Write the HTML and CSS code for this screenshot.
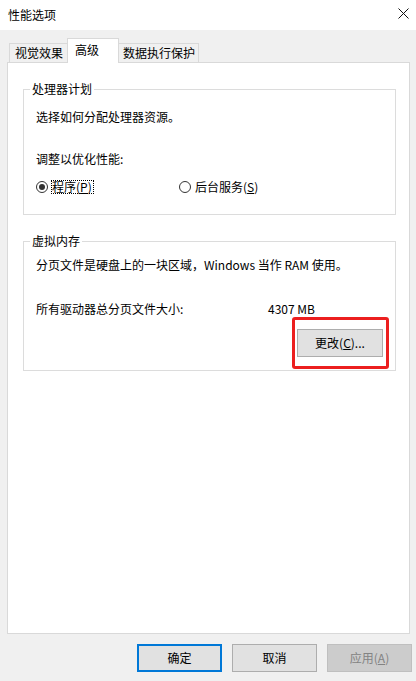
FILE: index.html
```html
<!DOCTYPE html>
<html lang="zh-CN">
<head>
<meta charset="utf-8">
<title>性能选项</title>
<link rel="stylesheet" href="styles.css">
</head>
<body>
<div class="window">
  <div class="titlebar">
    <span class="title">性能选项</span>
    <svg class="close" width="11" height="11" viewBox="0 0 11 11" aria-hidden="true">
      <path d="M0.5 0.5 L10.5 10.5 M10.5 0.5 L0.5 10.5" stroke="#111" stroke-width="1" fill="none"/>
    </svg>
  </div>
  <div class="tabs">
    <div class="tab tab-visual">视觉效果</div>
    <div class="tab tab-adv active">高级</div>
    <div class="tab tab-dep">数据执行保护</div>
  </div>
  <div class="panel">
    <fieldset class="group group-cpu">
      <legend>处理器计划</legend>
      <p class="line">选择如何分配处理器资源。</p>
      <p class="line sub">调整以优化性能:</p>
      <div class="radios">
        <label class="radio radio-prog"><span class="dot checked"></span><span class="focus">程序(<u>P</u>)</span></label>
        <label class="radio radio-bg"><span class="dot"></span><span class="rlabel">后台服务(<u>S</u>)</span></label>
      </div>
    </fieldset>
    <fieldset class="group group-vm">
      <legend>虚拟内存</legend>
      <p class="line">分页文件是硬盘上的一块区域，Windows 当作 RAM 使用。</p>
      <div class="size-row"><span class="size-label">所有驱动器总分页文件大小:</span><span class="size-value">4307 MB</span></div>
      <div class="change-row">
        <span class="highlight"><button class="btn btn-change">更改(<u>C</u>)...</button></span>
      </div>
    </fieldset>
  </div>
  <div class="footer">
    <button class="btn btn-default">确定</button>
    <button class="btn">取消</button>
    <button class="btn btn-disabled">应用(<u>A</u>)</button>
  </div>
</div>
</body>
</html>
```

FILE: styles.css
```css
* { box-sizing: border-box; }
html, body {
  margin: 0;
  padding: 0;
  width: 416px;
  height: 681px;
  overflow: hidden;
}
body {
  font-family: "Noto Sans CJK SC", "Microsoft YaHei", "Noto Sans", sans-serif;
  font-size: 12px;
  line-height: 16px;
  color: #000;
  background: #f0f0f0;
}
.window {
  display: flex;
  flex-direction: column;
  height: 681px;
}
.titlebar {
  height: 30px;
  flex: none;
  background: #fff;
  display: flex;
  align-items: center;
  justify-content: space-between;
  padding: 0 7px 0 8px;
}
.title { line-height: 16px; }
.close { display: block; margin-bottom: 3px; }

.tabs {
  height: 32px;
  flex: none;
  display: flex;
  align-items: flex-end;
  padding-left: 9px;
}
.tab {
  height: 19px;
  border: 1px solid #d9d9d9;
  border-bottom: none;
  background: #f0f0f0;
  padding-top: 1px;
  white-space: nowrap;
}
.tab-visual { width: 58px; padding-left: 5px; border-right: none; }
.tab-adv { width: 52px; padding-left: 7px; }
.tab-dep { width: 80px; padding-left: 4px; border-left: none; }
.tab.active {
  height: 25px;
  margin-bottom: -1px;
  background: #fff;
  padding-top: 3px;
  position: relative;
  z-index: 1;
}

.panel {
  flex: 1;
  background: #fff;
  border: 1px solid #d9d9d9;
  margin: 0 6px 0 7px;
  padding: 18px 13px 0 15px;
}
.group {
  margin: 0;
  min-width: 0;
  border: 1px solid #dcdcdc;
  padding: 12px 12px 19px 12px;
}
.group legend {
  padding: 0 2px;
  margin-left: -6px;
  line-height: 16px;
}
.group-vm {
  margin-top: 18px;
  padding: 8px 12px 13px 12px;
}
.line { margin: 0; white-space: nowrap; }
.sub { margin-top: 26px; }

.radios {
  margin-top: 12px;
  display: flex;
  align-items: center;
  height: 16px;
}
.radio {
  display: flex;
  align-items: center;
}
.radio-prog { width: 143px; }
.dot {
  width: 12px;
  height: 12px;
  border: 1px solid #333;
  border-radius: 50%;
  display: flex;
  align-items: center;
  justify-content: center;
}
.dot.checked::before {
  content: "";
  width: 6px;
  height: 6px;
  border-radius: 50%;
  background: #333;
}
.focus {
  margin-left: 3px;
  border: 1px dotted #000;
  line-height: 12px;
  padding: 0 1px 0 0;
}
.rlabel { margin-left: 4px; }
u { text-underline-offset: 1px; }

.size-row {
  margin-top: 28px;
  display: flex;
  white-space: nowrap;
}
.size-label { width: 232px; }

.change-row {
  margin-top: 12px;
  display: flex;
  justify-content: flex-end;
}
.highlight {
  position: relative;
  display: block;
}
.highlight::after {
  content: "";
  position: absolute;
  top: -12px;
  bottom: -12px;
  left: -5px;
  right: -6px;
  border: 3px solid #ec1f1f;
  border-radius: 3px;
  pointer-events: none;
}

.btn {
  font-family: inherit;
  font-size: 12px;
  line-height: 16px;
  color: #000;
  background: #e1e1e1;
  border: 1px solid #adadad;
  border-radius: 0;
  padding: 0;
  margin: 0;
  width: 85px;
  height: 28px;
  display: block;
}
.btn-change { width: 86px; }
.btn-default { border: 2px solid #0078d7; }
.btn-disabled {
  background: #cccccc;
  border-color: #bfbfbf;
  color: #838383;
}

.footer {
  flex: none;
  height: 47px;
  display: flex;
  justify-content: flex-end;
  gap: 10px;
  padding: 10px 4px 9px 0;
}
```
